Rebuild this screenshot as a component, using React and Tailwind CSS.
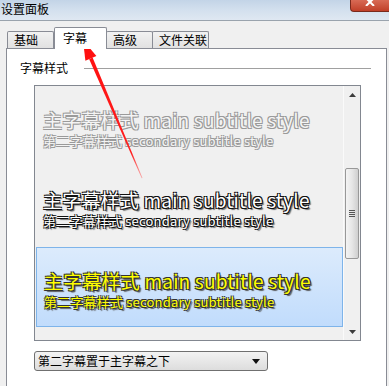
import React from 'react';

const CJK = { fontFamily: '"Noto Sans CJK SC", "Noto Sans", sans-serif' };

const TABS = [
  { label: '基础', w: 'w-[47px]' },
  { label: '字幕', w: 'w-[53px]', active: true },
  { label: '高级', w: 'w-[47px]' },
  { label: '文件关联', w: 'w-[57px]' },
];

const ITEMS = [
  {
    main: 'text-[#f4f4f4] [text-shadow:-1px_-1px_0_#9a9a9a,1px_-1px_0_#9a9a9a,-1px_1px_0_#9a9a9a,1px_1px_0_#9a9a9a]',
    sub: 'text-[#f4f4f4] [text-shadow:-1px_-1px_0_#9a9a9a,1px_-1px_0_#9a9a9a,-1px_1px_0_#9a9a9a,1px_1px_0_#9a9a9a]',
  },
  {
    main: 'text-white [text-shadow:-1px_-1px_0_#111,1px_-1px_0_#111,-1px_1px_0_#111,1px_1px_0_#111,2px_2px_1px_#666]',
    sub: 'text-white [text-shadow:-1px_-1px_0_#111,1px_-1px_0_#111,-1px_1px_0_#111,1px_1px_0_#111,2px_2px_1px_#666]',
  },
  {
    main: 'text-[#ffff00] [text-shadow:-1px_-1px_0_#333,1px_-1px_0_#333,-1px_1px_0_#333,1px_1px_0_#333,2px_2px_1px_#555]',
    sub: 'text-[#ffff00] [text-shadow:-1px_-1px_0_#333,1px_-1px_0_#333,-1px_1px_0_#333,1px_1px_0_#333,2px_2px_1px_#555]',
    selected: true,
  },
];

function Tab({ label, w, active }) {
  if (active) {
    return (
      <div className={`${w} h-[22px] -mb-[1px] relative z-10 bg-white border border-b-0 border-[#898c95] rounded-t-[2px] text-[12px] leading-[20px] pl-[8px] text-black whitespace-nowrap`}>
        {label}
      </div>
    );
  }
  return (
    <div className={`${w} h-[17px] -ml-[1px] first:ml-0 bg-gradient-to-b from-[#f2f2f2] to-[#e1e1e1] border border-b-0 border-[#898c95] rounded-t-[2px] text-[12px] leading-[16px] pl-[6px] text-black whitespace-nowrap`}>
      {label}
    </div>
  );
}

function SubtitleItem({ item }) {
  return (
    <div
      className={`h-[80px] pl-[7px] pt-[22px] ${
        item.selected
          ? 'border border-[#7eb4ea] bg-gradient-to-b from-[#dcebfc] to-[#c1dcfc] pl-[6px] pt-[21px]'
          : ''
      }`}
    >
      <div className={`text-[19px] leading-[21px] tracking-[0.2px] whitespace-nowrap ${item.main}`}>主字幕样式 main subtitle style</div>
      <div className={`text-[13px] leading-[15px] tracking-[0.2px] mt-[3px] whitespace-nowrap ${item.sub}`}>第二字幕样式 secondary subtitle style</div>
    </div>
  );
}

function Scrollbar() {
  return (
    <div className="w-[17px] flex flex-col bg-[#f0f0f0] border-l border-[#fafafa]">
      <div className="h-[17px] flex items-center justify-center">
        <svg width="7" height="4" viewBox="0 0 7 4"><path d="M3.5 0L7 4H0z" fill="#3c3c3c" /></svg>
      </div>
      <div className="flex-1 flex flex-col">
        <div className="mt-[65px] ml-[1px] w-[14px] h-[91px] rounded-[2px] border border-[#989898] bg-gradient-to-r from-[#f4f4f4] via-[#e6e6e6] to-[#cfcfcf] flex items-center justify-center">
          <div className="flex flex-col gap-[1px]">
            <div className="w-[6px] h-[1px] bg-[#555]" />
            <div className="w-[6px] h-[1px] bg-[#555]" />
            <div className="w-[6px] h-[1px] bg-[#555]" />
            <div className="w-[6px] h-[1px] bg-[#555]" />
          </div>
        </div>
      </div>
      <div className="h-[17px] flex items-center justify-center">
        <svg width="7" height="4" viewBox="0 0 7 4"><path d="M0 0H7L3.5 4z" fill="#3c3c3c" /></svg>
      </div>
    </div>
  );
}

export default function App() {
  return (
    <div className="w-[389px] h-[386px] bg-[#f0f0f0] relative overflow-hidden" style={CJK}>
      {/* Title bar */}
      <div className="h-[21px] flex items-start justify-between bg-gradient-to-b from-[#c3d4e7] via-[#d3e0ee] to-[#dfe8f2] border-b border-[#9aa3ad]">
        <span className="text-[12px] leading-[18px] pl-[1px] text-black">设置面板</span>
        <div className="w-[39px] h-[12px] rounded-bl-[4px] border border-t-0 border-r-0 border-[#7a2a1c] bg-gradient-to-b from-[#d86a55] to-[#c03f28] flex justify-center">
          <svg width="10" height="6" viewBox="0 0 10 6">
            <path d="M1 -2L9 6M9 -2L1 6" stroke="#fff" strokeWidth="2" />
          </svg>
        </div>
      </div>

      {/* Tabs */}
      <div className="h-[27px] flex items-end pl-[7px]">
        {TABS.map(t => <Tab key={t.label} {...t} />)}
      </div>

      {/* Panel */}
      <div className="ml-[6px] w-[381px] h-[400px] bg-white border border-[#898c95]">
        <div className="flex items-center pl-[13px] pr-[15px] pt-[11px]">
          <span className="text-[12px] leading-[16px] text-black">字幕样式</span>
          <div className="flex-1 ml-[16px] h-[1px] bg-[#a0a0a0]" />
        </div>

        {/* List */}
        <div className="ml-[27px] mt-[9px] w-[327px] h-[256px] border border-[#828790] bg-[#f0f0f0] flex">
          <div className="flex-1 pt-[1px] pl-[1px]">
            {ITEMS.map((it, i) => <SubtitleItem key={i} item={it} />)}
          </div>
          <Scrollbar />
        </div>

        {/* Dropdown */}
        <div className="ml-[27px] mt-[10px] w-[234px] h-[20px] rounded-[3px] border border-[#707070] bg-gradient-to-b from-[#f3f3f3] to-[#dddddd] flex items-center justify-between pl-[3px] pr-[7px]">
          <span className="text-[12px] leading-[16px] text-black">第二字幕置于主字幕之下</span>
          <svg width="8" height="5" viewBox="0 0 8 5"><path d="M0 0H8L4 5z" fill="#111" /></svg>
        </div>
      </div>

      {/* Red arrow annotation */}
      <svg className="absolute left-0 top-0 pointer-events-none" width="389" height="386" viewBox="0 0 389 386">
        <defs>
          <linearGradient id="fade" x1="88" y1="58" x2="142" y2="178" gradientUnits="userSpaceOnUse">
            <stop offset="0" stopColor="#ff1010" />
            <stop offset="0.8" stopColor="#ff2020" />
            <stop offset="1" stopColor="#ff6060" stopOpacity="0.5" />
          </linearGradient>
        </defs>
        <polygon points="83,40 96.4,56 85.4,60.8" fill="#ff1010" />
        <polygon points="92.6,57.6 89.2,59.2 141.7,178.3 142.5,178" fill="url(#fade)" />
      </svg>
    </div>
  );
}
